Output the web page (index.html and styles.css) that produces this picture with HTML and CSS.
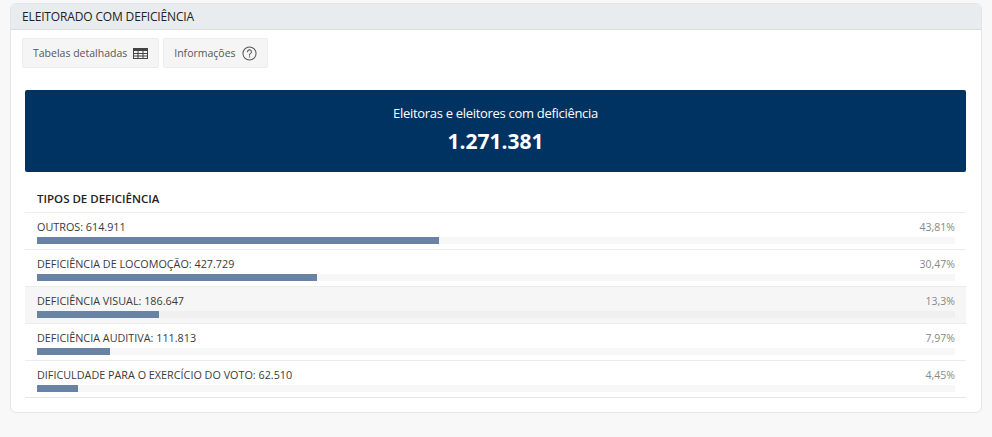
FILE: index.html
```html
<!DOCTYPE html>
<html lang="pt-BR">
<head>
<meta charset="utf-8">
<title>Eleitorado com deficiência</title>
<link rel="stylesheet" href="styles.css">
</head>
<body>
<div class="page">
  <section class="card">
    <header class="card-header">ELEITORADO COM DEFICIÊNCIA</header>
    <div class="card-body">
      <div class="toolbar">
        <button class="btn">Tabelas detalhadas
          <svg class="ico" width="15" height="11" viewBox="0 0 15 11" aria-hidden="true">
            <rect x="0.5" y="0.5" width="14" height="10" fill="none" stroke="#444" stroke-width="1"/>
            <rect x="0.5" y="0.5" width="14" height="2.5" fill="#444"/>
            <line x1="0.5" y1="5.5" x2="14.5" y2="5.5" stroke="#444"/>
            <line x1="0.5" y1="8" x2="14.5" y2="8" stroke="#444"/>
            <line x1="5" y1="0.5" x2="5" y2="10.5" stroke="#444"/>
            <line x1="10" y1="0.5" x2="10" y2="10.5" stroke="#444"/>
          </svg>
        </button>
        <button class="btn">Informações
          <svg class="ico" width="15" height="15" viewBox="0 0 16 16" aria-hidden="true">
            <circle cx="8" cy="8" r="7" fill="none" stroke="#555" stroke-width="1.1"/>
            <path d="M5.9 6.2a2.1 2.1 0 1 1 3 1.9c-.6.3-.9.7-.9 1.3v.5" fill="none" stroke="#555" stroke-width="1.1" stroke-linecap="round"/>
            <circle cx="8" cy="11.6" r="0.75" fill="#555"/>
          </svg>
        </button>
      </div>

      <div class="total">
        <div class="total-label">Eleitoras e eleitores com deficiência</div>
        <div class="total-value">1.271.381</div>
      </div>

      <div class="types">
        <h3 class="types-title">TIPOS DE DEFICIÊNCIA</h3>
        <ul class="rows">
          <li class="row">
            <div class="row-line"><span>OUTROS: 614.911</span><span class="pct">43,81%</span></div>
            <div class="track"><div class="bar" style="width:43.81%"></div></div>
          </li>
          <li class="row">
            <div class="row-line"><span>DEFICIÊNCIA DE LOCOMOÇÃO: 427.729</span><span class="pct">30,47%</span></div>
            <div class="track"><div class="bar" style="width:30.47%"></div></div>
          </li>
          <li class="row row-hover">
            <div class="row-line"><span>DEFICIÊNCIA VISUAL: 186.647</span><span class="pct">13,3%</span></div>
            <div class="track"><div class="bar" style="width:13.3%"></div></div>
          </li>
          <li class="row">
            <div class="row-line"><span>DEFICIÊNCIA AUDITIVA: 111.813</span><span class="pct">7,97%</span></div>
            <div class="track"><div class="bar" style="width:7.97%"></div></div>
          </li>
          <li class="row">
            <div class="row-line"><span>DIFICULDADE PARA O EXERCÍCIO DO VOTO: 62.510</span><span class="pct">4,45%</span></div>
            <div class="track"><div class="bar" style="width:4.45%"></div></div>
          </li>
        </ul>
      </div>
    </div>
  </section>
</div>
</body>
</html>
```

FILE: styles.css
```css
* { box-sizing: border-box; }
html, body {
  margin: 0;
  padding: 0;
  background: #f8f8f8;
  font-family: "Open Sans", "Noto Sans", "Liberation Sans", sans-serif;
  color: #333;
}
.page {
  padding: 3px 10px 0 10px;
}
.card {
  background: #fff;
  border: 1px solid #e2e4e7;
  border-radius: 6px;
  overflow: hidden;
}
.card-header {
  height: 26px;
  background: #e9ecef;
  border-bottom: 1px solid #dadde1;
  padding: 0 11px;
  display: flex;
  align-items: center;
  font-size: 12px;
  letter-spacing: -0.15px;
  color: #222;
}
.card-body {
  padding: 8px 15px 14px 14px;
}
.toolbar {
  display: flex;
  gap: 4px;
  margin-left: -3px;
}
.btn {
  display: flex;
  align-items: center;
  gap: 6px;
  height: 30px;
  padding: 0 10px;
  background: #f5f5f5;
  border: 1px solid #ececec;
  border-radius: 2px;
  font-family: inherit;
  font-size: 10.5px;
  color: #555;
}
.ico { display: block; }
.total {
  margin-top: 22px;
  height: 82px;
  background: #003262;
  border-radius: 2px;
  color: #fff;
  display: flex;
  flex-direction: column;
  align-items: center;
  padding-top: 15px;
}
.total-label {
  font-size: 13px;
  letter-spacing: -0.3px;
  line-height: 16px;
}
.total-value {
  font-size: 21px;
  font-weight: 700;
  line-height: 26px;
  margin-top: 7px;
}
.types {
  margin-top: 19px;
}
.types-title {
  margin: 0;
  padding: 0 12px;
  font-size: 11.5px;
  font-weight: 600;
  color: #222;
  line-height: 16px;
  margin-bottom: 5px;
}
.rows {
  list-style: none;
  margin: 0;
  padding: 0;
  border-bottom: 1px solid #e6e6e6;
}
.row {
  border-top: 1px solid #ececec;
  padding: 6px 11px 5px 12px;
}
.row-hover {
  background: #f6f6f6;
}
.row-line {
  display: flex;
  justify-content: space-between;
  font-size: 10.8px;
  line-height: 16px;
  color: #3a3a3a;
}
.pct {
  color: #888;
  font-size: 10.5px;
}
.track {
  margin-top: 2px;
  height: 7px;
  background: #f7f7f7;
}
.row-hover .track { background: #f0f0f0; }
.bar {
  height: 7px;
  background: #6883a3;
}
```
